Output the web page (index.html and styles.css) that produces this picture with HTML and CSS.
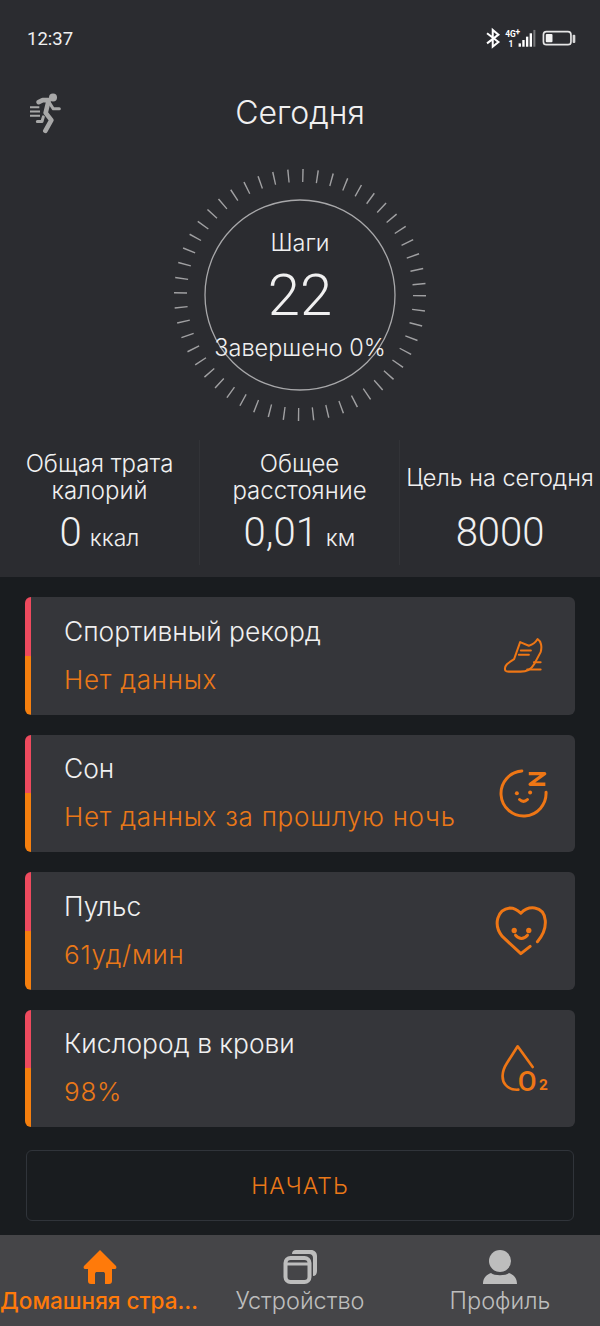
FILE: index.html
```html
<!DOCTYPE html>
<html lang="ru">
    <head>
        <meta charset="UTF-8" />
        <meta name="viewport" content="width=device-width, initial-scale=1.0" />
        <title>Сегодня</title>
        <link rel="stylesheet" href="styles.css">
    </head>
    <body>
        <section class="today">
            <div class="status-bar">
                <span class="clock">12:37</span>
                <svg class="status-icons" viewBox="40 20 280 70">
                    <path d="M52 38 L86 64 L69 78 V28 L86 42 L52 68" fill="none" stroke="#fff" stroke-width="6" />
                    <text class="net-label" x="106" y="50">4G</text>
                    <text class="net-label" x="137" y="42">+</text>
                    <text class="net-label" x="116" y="80">1</text>
                    <rect x="146" y="68" width="7" height="10" fill="#fff" />
                    <rect x="157" y="58" width="7" height="20" fill="#fff" />
                    <rect x="168" y="48" width="7" height="30" fill="#fff" />
                    <rect x="179" y="38" width="7" height="40" fill="#fff" />
                    <rect x="190" y="28" width="6" height="50" fill="#77787a" />
                    <rect x="220" y="33" width="82" height="39" rx="9" fill="none" stroke="#e6e6e6" stroke-width="5" />
                    <rect x="227" y="40" width="20" height="25" rx="3" fill="#f2f2f2" />
                    <rect x="307" y="42" width="8" height="25" rx="3" fill="#d8d8d8" />
                </svg>
            </div>

            <header class="top-bar">
                <svg class="runner" viewBox="40 30 105 125">
                    <circle cx="115" cy="46" r="12" fill="#a8a8a8" />
                    <g fill="none" stroke="#a8a8a8" stroke-linecap="round" stroke-linejoin="round">
                        <path d="M72 60 L84 54 H102 L93 92 L110 114 L92 146" stroke-width="14" />
                        <path d="M103 60 L116 80 H134" stroke-width="9" />
                        <path d="M86 104 L82 118 H68" stroke-width="9" />
                    </g>
                    <path d="M46 75 H74 M46 88 H76 M46 101 H76" stroke="#a8a8a8" stroke-width="6" />
                </svg>
                <h1 class="page-title">Сегодня</h1>
            </header>

            <div class="dial">
                <svg class="dial-ring" viewBox="0 0 260 260">
                    <circle class="dial-ticks" cx="130" cy="130" r="119.5" />
                    <circle class="dial-track" cx="130" cy="130" r="95" />
                </svg>
                <div class="dial-text">
                    <span class="dial-label">Шаги</span>
                    <span class="dial-value">22</span>
                    <span class="dial-label">Завершено 0%</span>
                </div>
            </div>

            <div class="stats">
                <div class="stat">
                    <div class="stat-label">Общая трата калорий</div>
                    <div class="stat-value">0<small>ккал</small></div>
                </div>
                <div class="stat">
                    <div class="stat-label">Общее<br>расстояние</div>
                    <div class="stat-value">0,01<small>км</small></div>
                </div>
                <div class="stat">
                    <div class="stat-label">Цель на сегодня</div>
                    <div class="stat-value">8000</div>
                </div>
            </div>
        </section>

        <main class="records">
            <div class="card">
                <div class="card-text">
                    <div class="card-title">Спортивный рекорд</div>
                    <div class="card-sub">Нет данных</div>
                </div>
                <svg class="card-icon icon-shoe" viewBox="70 50 125 110">
                    <path d="M80 150 C74 135 90 126 106 116 L124 65 L150 76 C160 73 170 66 176 56 C186 62 190 78 185 95 L166 130 C156 148 140 153 125 153 H90 C85 153 82 152 80 150 Z" />
                    <path d="M126 90 H156 M120 103 H150 M165 125 H185 M145 147 H185" />
                </svg>
            </div>
            <div class="card">
                <div class="card-text">
                    <div class="card-title">Сон</div>
                    <div class="card-sub">Нет данных за прошлую ночь</div>
                </div>
                <svg class="card-icon icon-sleep" viewBox="50 440 160 160">
                    <path d="M125 452 A68 68 0 1 0 198 516" />
                    <path class="z" d="M146 460 H194 L150 492 H196" />
                    <path d="M118 538 Q130 550 142 538" />
                    <circle class="dot" cx="110" cy="519" r="6" />
                    <circle class="dot" cx="150" cy="517" r="6" />
                </svg>
            </div>
            <div class="card">
                <div class="card-text">
                    <div class="card-title">Пульс</div>
                    <div class="card-sub">61уд/мин</div>
                </div>
                <svg class="card-icon icon-heart" viewBox="45 40 170 160">
                    <path d="M156 168 L128 190 L72 138 C44 104 56 56 95 52 C110 52 120 60 128 68 C140 55 155 50 170 52 C208 58 214 112 178 154" />
                    <path d="M112 134 Q130 154 148 134" />
                    <circle class="dot" cx="108" cy="120" r="8" />
                    <circle class="dot" cx="152" cy="120" r="8" />
                </svg>
            </div>
            <div class="card">
                <div class="card-text">
                    <div class="card-title">Кислород в крови</div>
                    <div class="card-sub">98%</div>
                </div>
                <svg class="card-icon icon-drop" viewBox="55 460 150 150">
                    <path d="M153 532 L108 470 L76 520 C58 548 60 572 72 586 C82 598 95 601 110 600" />
                    <text class="o2-big" x="108" y="603">O</text>
                    <text class="o2-small" x="172" y="602">2</text>
                </svg>
            </div>

            <button class="start-btn">НАЧАТЬ</button>
        </main>

        <nav class="tabs">
            <div class="tab tab-active">
                <svg class="tab-icon" viewBox="0 0 34 34">
                    <path d="M17 0 L33 16 C34 18 33 19 31 19 H29 V31 C29 33 28 34 26 34 H22 V24 C22 22.500 21 22 20 22 H14 C13 22 12 22.500 12 24 V34 H8 C6 34 5 33 5 31 V19 H3 C1 19 0 18 1 16 Z" fill="#ff7a0a" />
                </svg>
                <span class="tab-label">Домашняя страница</span>
            </div>
            <div class="tab">
                <svg class="tab-icon" viewBox="0 0 34 34">
                    <path d="M9 4 C9 1.500 10.500 0 13 0 H28 C31.500 0 34 2.500 34 6 V21 C34 24 32.500 26 30 26 V8 C30 5.500 28.500 4 26 4 Z" fill="#bdbdbd" />
                    <rect x="2.500" y="8" width="24" height="24" rx="5" fill="#454548" stroke="#bdbdbd" stroke-width="4" />
                    <path d="M3 14 H26" stroke="#bdbdbd" stroke-width="3" />
                </svg>
                <span class="tab-label">Устройство</span>
            </div>
            <div class="tab">
                <svg class="tab-icon" viewBox="0 0 34 34">
                    <ellipse cx="17" cy="11" rx="11" ry="11" fill="#bdbdbd" />
                    <path d="M0 34 C0 28 3 25 8 23 C11 26 23 26 26 23 C31 25 34 28 34 34 Z" fill="#bdbdbd" />
                </svg>
                <span class="tab-label">Профиль</span>
            </div>
        </nav>
    </body>
</html>
```

FILE: styles.css
```css
body {
    display: flex;
    flex-direction: column;
    height: 100vh;
    margin: 0;
    overflow: hidden;
    background-color: #191c1f;
    color: #f0f0f0;
    font-family: Inter, Roboto, sans-serif;
    font-weight: 300;
}

.today {
    height: 577px;
    background-color: #2b2c30;
}

.status-bar {
    display: flex;
    justify-content: space-between;
    align-items: center;
    height: 24px;
    padding: 27px 23px 0 27px;
}

.clock {
    font-family: Roboto, sans-serif;
    font-size: 18.500px;
    font-weight: 400;
}

.status-icons {
    width: 94px;
    height: 24px;
}

.net-label {
    fill: #fff;
    font-family: Roboto, sans-serif;
    font-size: 25px;
    font-weight: 700;
}

.top-bar {
    position: relative;
    display: flex;
    justify-content: center;
    align-items: center;
    height: 50px;
    margin-top: 36px;
}

.runner {
    position: absolute;
    left: 28px;
    top: 5px;
    width: 35px;
    height: 42px;
}

.page-title {
    margin: 0;
    font-size: 32px;
    font-weight: 300;
}

.dial {
    position: relative;
    display: flex;
    justify-content: center;
    align-items: center;
    width: 260px;
    height: 260px;
    margin: 28px auto 0;
}

.dial-ring {
    position: absolute;
    inset: 0;
}

.dial-ticks {
    fill: none;
    stroke: #a0a0a2;
    stroke-width: 13;
    stroke-dasharray: 1.4 13.09;
}

.dial-track {
    fill: none;
    stroke: #a8a8aa;
    stroke-width: 1.3;
}

.dial-text {
    position: relative;
    display: flex;
    flex-direction: column;
    align-items: center;
}

.dial-label {
    font-size: 23.500px;
    line-height: 30px;
}

.dial-value {
    font-family: Roboto, sans-serif;
    font-size: 58px;
    line-height: 75px;
}

.stats {
    display: grid;
    grid-template-columns: repeat(3, 200px);
    margin-top: 15px;
}

.stat {
    display: flex;
    flex-direction: column;
    align-items: center;
    box-sizing: border-box;
    height: 125px;
    padding-top: 10px;
    text-align: center;
    border-right: 1px solid #323337;
}

.stat:last-child {
    border-right: none;
}

.stat-label {
    display: flex;
    align-items: center;
    height: 54px;
    padding: 0 16px;
    font-size: 24px;
    line-height: 27px;
}

.stat:last-child .stat-label {
    padding: 0;
    font-size: 23.500px;
}

.stat-value {
    margin-top: 3px;
    font-family: Roboto, sans-serif;
    font-size: 40px;
    line-height: 52px;
}

.stat-value small {
    margin-left: 8px;
    font-family: Inter, Roboto, sans-serif;
    font-size: 23px;
}

.records {
    display: flex;
    flex-direction: column;
    gap: 20px;
    flex: 1;
    padding: 20px 25px 0;
}

.card {
    display: flex;
    justify-content: space-between;
    align-items: center;
    flex: none;
    height: 117.500px;
    box-sizing: border-box;
    padding: 0 25px 0 39px;
    background:
        linear-gradient(#ee4a5e 0 50%, #f57f0e 50% 100%) left / 6px 100% no-repeat,
        #35363a;
    border-radius: 6px;
}

.card-title {
    margin-top: -1px;
    font-size: 26.400px;
    line-height: 34px;
}

.card-sub {
    margin-top: 15px;
    color: #ea7818;
    font-size: 26px;
    letter-spacing: 0.75px;
    line-height: 34px;
}

.card-icon {
    overflow: visible;
    fill: none;
    stroke: #ee7615;
    stroke-width: 8;
    stroke-linecap: round;
    stroke-linejoin: round;
}

.icon-shoe {
    width: 42px;
    height: 37px;
    margin-right: 6px;
    stroke-width: 6;
}

.icon-sleep {
    width: 53px;
    height: 53px;
    stroke-width: 9;
}

.icon-sleep .z {
    stroke-width: 10;
    stroke-linecap: butt;
}

.icon-heart {
    width: 57px;
    height: 53px;
    stroke-width: 9;
}

.icon-drop {
    width: 50px;
    height: 50px;
}

.dot {
    fill: #ee7615;
    stroke: none;
}

.o2-big {
    fill: #ee7615;
    stroke: none;
    font-family: Roboto, sans-serif;
    font-size: 82px;
    font-weight: 500;
}

.o2-small {
    fill: #ee7615;
    stroke: none;
    font-family: Roboto, sans-serif;
    font-size: 46px;
    font-weight: 700;
}

.start-btn {
    flex: none;
    height: 71px;
    margin: 3px 1px 0;
    background: none;
    border: 1.5px solid #30343a;
    border-radius: 6px;
    color: #ea7818;
    font-family: inherit;
    font-size: 23px;
    font-weight: 300;
    letter-spacing: 1px;
}

.tabs {
    display: grid;
    grid-template-columns: repeat(3, 200px);
    flex: none;
    height: 91px;
    background-color: #454548;
}

.tab {
    display: flex;
    flex-direction: column;
    align-items: center;
    min-width: 0;
    padding-top: 15px;
    color: #bdbdbd;
}

.tab-icon {
    width: 34px;
    height: 34px;
}

.tab-label {
    max-width: 100%;
    margin-top: 1px;
    overflow: hidden;
    font-size: 23.500px;
    line-height: 32px;
    text-overflow: ellipsis;
    white-space: nowrap;
}

.tab-active {
    color: #ff7a0a;
}

.tab-active .tab-label {
    font-size: 22.500px;
    font-weight: 500;
}
```
